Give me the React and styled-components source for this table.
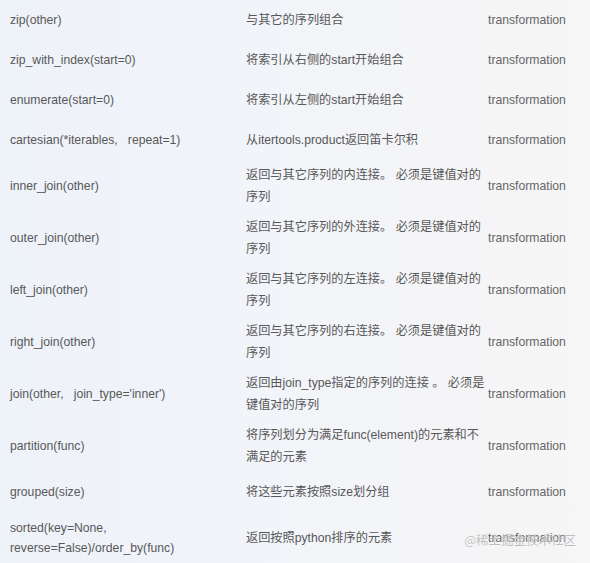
import React from 'react';
import styled, { createGlobalStyle } from 'styled-components';

const GlobalStyle = createGlobalStyle`
  html, body {
    margin: 0;
    padding: 0;
    background: #f5f5f6;
  }
`

const Page = styled.div`
  position: relative;
  width: 590px;
  height: 563px;
  overflow: hidden;
  background: linear-gradient(90deg, #eef2f9 0%, #f1f4f9 40%, #f5f5f7 80%, #f6f6f6 100%);
  font-family: "Liberation Sans", Arial, "Noto Sans CJK SC", sans-serif;
  font-size: 12.2px;
  color: #555;
`

const Table = styled.table`
  border-collapse: collapse;
  table-layout: fixed;
  width: 590px;
`

const Row = styled.tr`
  height: ${p => (p.tall ? 52 : 40)}px;
`

const Cell = styled.td`
  width: ${p => p.w}px;
  padding: 0 0 0 10px;
  vertical-align: middle;
  line-height: ${p => (p.tight ? 20 : 22)}px;
  white-space: nowrap;
  color: ${p => (p.muted ? '#666' : '#585858')};
`

const Watermark = styled.div`
  position: absolute;
  right: 14px;
  bottom: 14px;
  font-family: "Noto Sans CJK SC", sans-serif;
  font-size: 12.5px;
  color: rgba(170, 170, 170, 0.75);
  text-shadow: 0 0 1px #fff;
`

const rows = [
  ['zip(other)', '与其它的序列组合'],
  ['zip_with_index(start=0)', '将索引从右侧的start开始组合'],
  ['enumerate(start=0)', '将索引从左侧的start开始组合'],
  ['cartesian(*iterables,\u00a0\u00a0 repeat=1)', '从itertools.product返回笛卡尔积'],
  ['inner_join(other)', ['返回与其它序列的内连接。 必须是键值对的', '序列']],
  ['outer_join(other)', ['返回与其它序列的外连接。 必须是键值对的', '序列']],
  ['left_join(other)', ['返回与其它序列的左连接。 必须是键值对的', '序列']],
  ['right_join(other)', ['返回与其它序列的右连接。 必须是键值对的', '序列']],
  ["join(other,\u00a0\u00a0 join_type='inner')", ['返回由join_type指定的序列的连接 。 必须是', '键值对的序列']],
  ['partition(func)', ['将序列划分为满足func(element)的元素和不', '满足的元素']],
  ['grouped(size)', '将这些元素按照size划分组'],
  [['sorted(key=None,', 'reverse=False)/order_by(func)'], '返回按照python排序的元素'],
]

const lines = v =>
  Array.isArray(v)
    ? v.map((t, i) => (
        <React.Fragment key={i}>
          {i > 0 && <br />}
          {t}
        </React.Fragment>
      ))
    : v

export default function App() {
  return (
    <Page>
      <GlobalStyle />
      <Table>
        <tbody>
          {rows.map(([fn, desc], i) => {
            const tall = Array.isArray(fn) || Array.isArray(desc)
            const tight = i === rows.length - 1
            return (
              <Row key={i} tall={tall}>
                <Cell w={226} tight={tight}>{lines(fn)}</Cell>
                <Cell w={232} tight={tight}>{lines(desc)}</Cell>
                <Cell w={102} muted>transformation</Cell>
              </Row>
            )
          })}
        </tbody>
      </Table>
      <Watermark>@稀土掘金技术社区</Watermark>
    </Page>
  );
}
